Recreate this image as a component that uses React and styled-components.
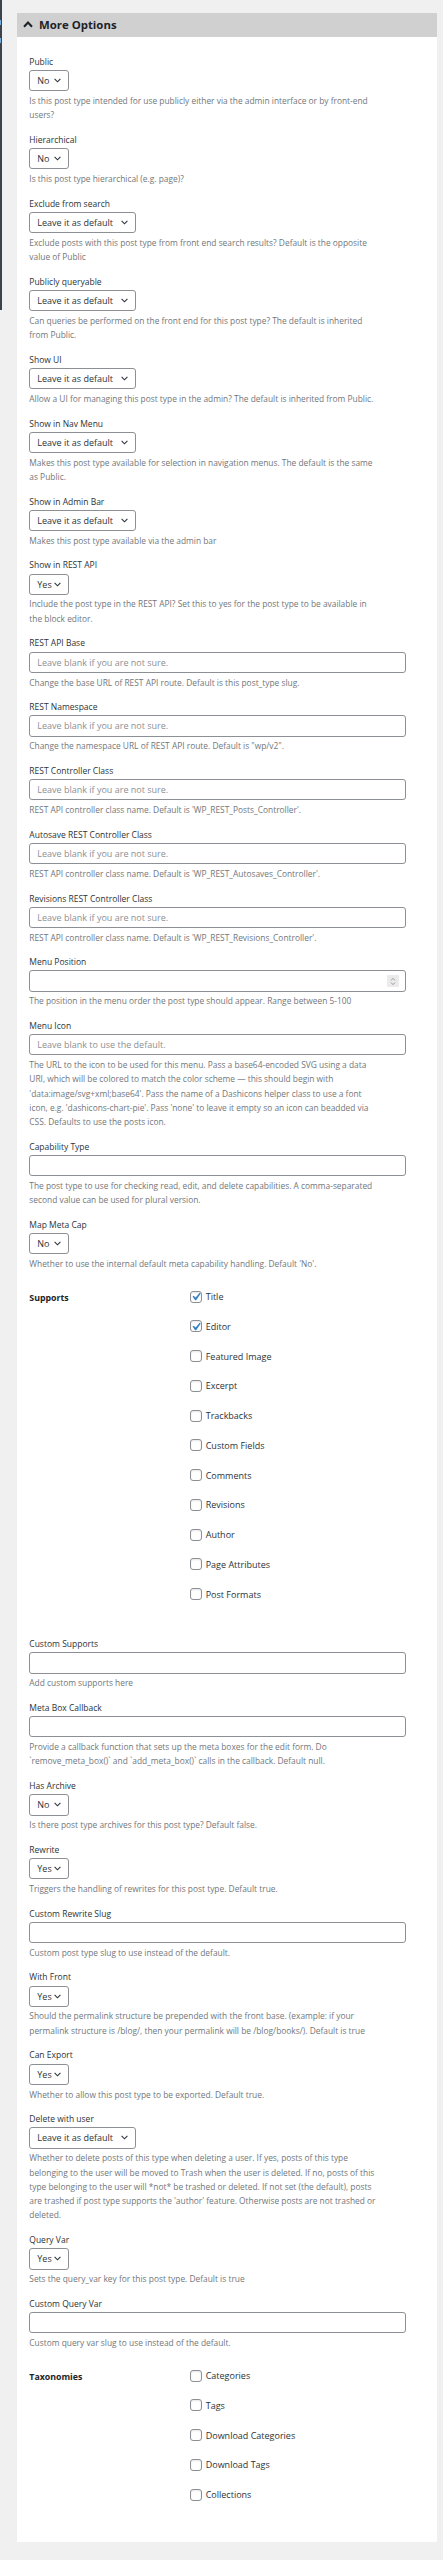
import React from "react";
import styled, { createGlobalStyle } from "styled-components";

const DEFAULT = "Leave it as default";
const BLANK = "Leave blank if you are not sure.";

const topFields = [
  {
    label: "Public",
    select: "No",
    desc: "Is this post type intended for use publicly either via the admin interface or by front-end\nusers?",
  },
  { label: "Hierarchical", select: "No", desc: "Is this post type hierarchical (e.g. page)?" },
  {
    label: "Exclude from search",
    select: DEFAULT,
    desc: "Exclude posts with this post type from front end search results? Default is the opposite\nvalue of Public",
  },
  {
    label: "Publicly queryable",
    select: DEFAULT,
    desc: "Can queries be performed on the front end for this post type? The default is inherited\nfrom Public.",
  },
  {
    label: "Show UI",
    select: DEFAULT,
    desc: "Allow a UI for managing this post type in the admin? The default is inherited from Public.",
  },
  {
    label: "Show in Nav Menu",
    select: DEFAULT,
    desc: "Makes this post type available for selection in navigation menus. The default is the same\nas Public.",
  },
  { label: "Show in Admin Bar", select: DEFAULT, desc: "Makes this post type available via the admin bar" },
  {
    label: "Show in REST API",
    select: "Yes",
    desc: "Include the post type in the REST API? Set this to yes for the post type to be available in\nthe block editor.",
  },
  {
    label: "REST API Base",
    input: BLANK,
    desc: "Change the base URL of REST API route. Default is this post_type slug.",
  },
  {
    label: "REST Namespace",
    input: BLANK,
    desc: 'Change the namespace URL of REST API route. Default is "wp/v2".',
  },
  {
    label: "REST Controller Class",
    input: BLANK,
    desc: "REST API controller class name. Default is 'WP_REST_Posts_Controller'.",
  },
  {
    label: "Autosave REST Controller Class",
    input: BLANK,
    desc: "REST API controller class name. Default is 'WP_REST_Autosaves_Controller'.",
  },
  {
    label: "Revisions REST Controller Class",
    input: BLANK,
    desc: "REST API controller class name. Default is 'WP_REST_Revisions_Controller'.",
  },
  {
    label: "Menu Position",
    number: true,
    desc: "The position in the menu order the post type should appear. Range between 5-100",
  },
  {
    label: "Menu Icon",
    input: "Leave blank to use the default.",
    desc:
      "The URL to the icon to be used for this menu. Pass a base64-encoded SVG using a data\n" +
      "URI, which will be colored to match the color scheme \u2014 this should begin with\n" +
      "'data:image/svg+xml;base64'. Pass the name of a Dashicons helper class to use a font\n" +
      "icon, e.g. 'dashicons-chart-pie'. Pass 'none' to leave it empty so an icon can beadded via\n" +
      "CSS. Defaults to use the posts icon.",
  },
  {
    label: "Capability Type",
    input: "",
    desc: "The post type to use for checking read, edit, and delete capabilities. A comma-separated\nsecond value can be used for plural version.",
  },
  {
    label: "Map Meta Cap",
    select: "No",
    desc: "Whether to use the internal default meta capability handling. Default 'No'.",
  },
];

const supports = [
  { name: "Title", checked: true },
  { name: "Editor", checked: true },
  { name: "Featured Image" },
  { name: "Excerpt" },
  { name: "Trackbacks" },
  { name: "Custom Fields" },
  { name: "Comments" },
  { name: "Revisions" },
  { name: "Author" },
  { name: "Page Attributes" },
  { name: "Post Formats" },
];

const bottomFields = [
  { label: "Custom Supports", input: "", desc: "Add custom supports here" },
  {
    label: "Meta Box Callback",
    input: "",
    desc: "Provide a callback function that sets up the meta boxes for the edit form. Do\n`remove_meta_box()` and `add_meta_box()` calls in the callback. Default null.",
  },
  { label: "Has Archive", select: "No", desc: "Is there post type archives for this post type? Default false." },
  { label: "Rewrite", select: "Yes", desc: "Triggers the handling of rewrites for this post type. Default true." },
  { label: "Custom Rewrite Slug", input: "", desc: "Custom post type slug to use instead of the default." },
  {
    label: "With Front",
    select: "Yes",
    desc: "Should the permalink structure be prepended with the front base. (example: if your\npermalink structure is /blog/, then your permalink will be /blog/books/). Default is true",
  },
  { label: "Can Export", select: "Yes", desc: "Whether to allow this post type to be exported. Default true." },
  {
    label: "Delete with user",
    select: DEFAULT,
    desc:
      "Whether to delete posts of this type when deleting a user. If yes, posts of this type\n" +
      "belonging to the user will be moved to Trash when the user is deleted. If no, posts of this\n" +
      "type belonging to the user will *not* be trashed or deleted. If not set (the default), posts\n" +
      "are trashed if post type supports the 'author' feature. Otherwise posts are not trashed or\n" +
      "deleted.",
  },
  { label: "Query Var", select: "Yes", desc: "Sets the query_var key for this post type. Default is true" },
  { label: "Custom Query Var", input: "", desc: "Custom query var slug to use instead of the default." },
];

const taxonomies = [
  { name: "Categories" },
  { name: "Tags" },
  { name: "Download Categories" },
  { name: "Download Tags" },
  { name: "Collections" },
];

function SelectControl({ value }) {
  return (
    <SelectBox $wide={value.length > 3}>
      <span>{value}</span>
      <svg width="7" height="5" viewBox="0 0 7 5">
        <path d="M0.6 0.9 L3.5 3.8 L6.4 0.9" fill="none" stroke="#2c3338" strokeWidth="1.1" />
      </svg>
    </SelectBox>
  );
}

function NumberControl() {
  return (
    <NumberBox>
      <Spinner>
        <svg width="6" height="9" viewBox="0 0 6 9">
          <path d="M1 3.4 L3 1.4 L5 3.4 M1 5.6 L3 7.6 L5 5.6" fill="none" stroke="#8c8f94" strokeWidth="0.9" />
        </svg>
      </Spinner>
    </NumberBox>
  );
}

function Field({ field }) {
  let control;
  if (field.select) control = <SelectControl value={field.select} />;
  else if (field.number) control = <NumberControl />;
  else control = <TextInput type="text" placeholder={field.input} readOnly />;

  return (
    <FieldWrap>
      <Label>{field.label}</Label>
      {control}
      <Desc>{field.desc}</Desc>
    </FieldWrap>
  );
}

function CheckGroup({ title, items }) {
  return (
    <CheckTable>
      <GroupTitle>{title}</GroupTitle>
      <CheckList>
        {items.map((item) => (
          <CheckRow key={item.name}>
            <Box>
              {item.checked && (
                <svg viewBox="0 0 20 20">
                  <path d="M14.83 4.89l1.34.94-5.81 8.38H9.02L5.78 9.67l1.34-1.25 2.57 2.4z" fill="#3582c4" />
                </svg>
              )}
            </Box>
            <CheckText>{item.name}</CheckText>
          </CheckRow>
        ))}
      </CheckList>
    </CheckTable>
  );
}

export default function App() {
  return (
    <>
      <GlobalStyle />
      <Page>
        <AdminEdge>
          <BlueMark />
          <BlueMark />
        </AdminEdge>
        <Main>
          <Panel>
            <PanelHeader>
              <svg width="10" height="7" viewBox="0 0 10 7">
                <path d="M1 5.8 L5 1.6 L9 5.8" fill="none" stroke="#1d2327" strokeWidth="2.1" />
              </svg>
              <Title>More Options</Title>
            </PanelHeader>
            <PanelBody>
              {topFields.map((f) => (
                <Field key={f.label} field={f} />
              ))}
              <CheckGroup title="Supports" items={supports} />
              {bottomFields.map((f) => (
                <Field key={f.label} field={f} />
              ))}
              <CheckGroup title="Taxonomies" items={taxonomies} />
            </PanelBody>
          </Panel>
        </Main>
      </Page>
    </>
  );
}

const GlobalStyle = createGlobalStyle`
  * {
    box-sizing: border-box;
  }
  body {
    margin: 0;
    background: #f0f0f1;
    font-family: "Segoe UI", "Open Sans", "Noto Sans", sans-serif;
    color: #2c3338;
  }
`;

const Page = styled.div`
  display: flex;
  align-items: flex-start;
  min-height: 2560px;
`;

const AdminEdge = styled.div`
  flex-shrink: 0;
  width: 2px;
  height: 310px;
  background: #3c434a;
  display: flex;
  flex-direction: column;
  gap: 13px;
  padding-top: 20px;
`;

const BlueMark = styled.div`
  width: 1px;
  height: 5px;
  background: #72aee6;
`;

const Main = styled.div`
  flex: 1;
  padding: 12.7px 6px 8px 15px;
`;

const Panel = styled.section`
  background: #fff;
`;

const PanelHeader = styled.div`
  height: 24.6px;
  background: #d0d0d1;
  display: flex;
  align-items: center;
  gap: 6px;
  padding-left: 6px;
  svg {
    display: block;
  }
`;

const Title = styled.h2`
  margin: 0;
  font-size: 11.4px;
  font-weight: 700;
  color: #1d2327;
`;

const PanelBody = styled.div`
  padding: 17.55px 0 4.25px 12.3px;
`;

const FieldWrap = styled.div`
  margin-bottom: 10.4px;
`;

const Label = styled.div`
  font-size: 8.5px;
  line-height: 14.3px;
  color: #2c3338;
  margin-bottom: 0.85px;
`;

const SelectBox = styled.div`
  width: ${(p) => (p.$wide ? "106.4px" : "39.3px")};
  height: 21.3px;
  display: flex;
  align-items: center;
  justify-content: space-between;
  padding: 0 6.5px 0 7px;
  border: 1px solid #8c8f94;
  border-radius: 3px;
  background: #fff;
  font-size: 9px;
  color: #2c3338;
  svg {
    display: block;
  }
`;

const TextInput = styled.input`
  display: block;
  width: 376.7px;
  height: 21.3px;
  margin: 0;
  padding: 0 7px;
  border: 1px solid #8c8f94;
  border-radius: 3px;
  background: #fff;
  font-family: inherit;
  font-size: 9px;
  color: #2c3338;
  outline: none;
  &::placeholder {
    color: #8c8f94;
  }
`;

const NumberBox = styled.div`
  width: 376.7px;
  height: 21.3px;
  display: flex;
  align-items: center;
  justify-content: flex-end;
  padding-right: 5.7px;
  border: 1px solid #8c8f94;
  border-radius: 3px;
  background: #fff;
`;

const Spinner = styled.span`
  width: 12.6px;
  height: 12.3px;
  display: flex;
  align-items: center;
  justify-content: center;
  background: #ebebeb;
  border-radius: 1px;
`;

const Desc = styled.p`
  margin: 2.65px 0 0;
  font-size: 8.4px;
  line-height: 14.3px;
  color: #72777c;
  white-space: pre-line;
  width: 385px;
`;

const CheckTable = styled.div`
  display: grid;
  grid-template-columns: 161px 1fr;
  margin: 3.2px 0 28.2px;
`;

const GroupTitle = styled.div`
  font-size: 8.8px;
  font-weight: 700;
  line-height: 29.75px;
  padding-top: 2.4px;
  color: #1d2327;
`;

const CheckList = styled.div`
  display: flex;
  flex-direction: column;
`;

const CheckRow = styled.div`
  height: 29.75px;
  display: flex;
  align-items: center;
`;

const Box = styled.span`
  width: 12px;
  height: 12px;
  flex-shrink: 0;
  border: 1px solid #8c8f94;
  border-radius: 3px;
  background: #fff;
  box-shadow: inset 0 1px 2px rgba(0, 0, 0, 0.1);
  svg {
    display: block;
    width: 15.75px;
    height: 15.75px;
    margin: -2.6px 0 0 -3px;
  }
`;

const CheckText = styled.span`
  margin-left: 3.4px;
  font-size: 9px;
  color: #2c3338;
`;
